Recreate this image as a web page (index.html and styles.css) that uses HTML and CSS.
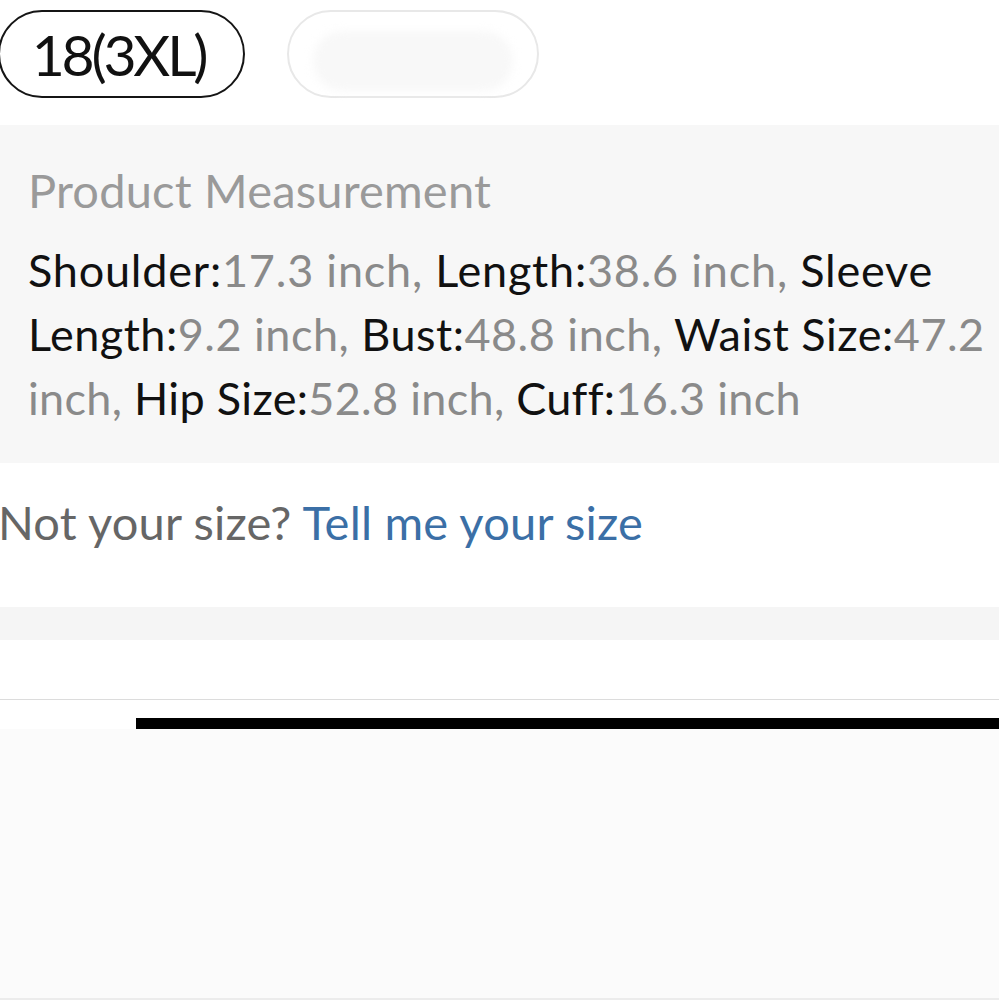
FILE: index.html
```html
<!DOCTYPE html>
<html lang="en">
<head>
<meta charset="utf-8">
<link rel="stylesheet" href="styles.css">
</head>
<body>
<div class="sizes">
  <div class="pill pill-active">18(3XL)</div>
  <div class="pill pill-blur"><span class="smudge"></span></div>
</div>
<section class="measure">
  <div class="measure-title">Product Measurement</div>
  <p class="measure-text"><span class="ln ln1"><b>Shoulder:</b>17.3 inch, <b>Length:</b>38.6 inch, <b>Sleeve</b></span><br><span class="ln ln2"><b>Length:</b>9.2 inch, <b>Bust:</b>48.8 inch, <b>Waist Size:</b>47.2</span><br><span class="ln ln3">inch, <b>Hip Size:</b>52.8 inch, <b>Cuff:</b>16.3 inch</span></p>
</section>
<p class="notsize">Not your size? <a class="tell" href="#">Tell me your size</a></p>
<div class="band"></div>
<div class="tabs"></div>
<div class="bar-row"><div class="bar"></div></div>
<div class="rest"></div>
</body>
</html>
```
FILE: styles.css
```css
html, body {
  margin: 0;
  padding: 0;
  background: #ffffff;
  font-family: Lato, "Noto Sans", sans-serif;
}
body {
  width: 999px;
  height: 1000px;
  overflow: hidden;
}
.sizes {
  display: flex;
  gap: 42px;
  padding-top: 10px;
  height: 88px;
  margin-left: -2px;
}
.pill {
  box-sizing: border-box;
  height: 88px;
  border-radius: 44px;
  display: flex;
  align-items: center;
  justify-content: center;
  font-size: 57px;
  color: #111;
}
.pill-active {
  width: 247px;
  border: 2px solid #151515;
  letter-spacing: -3.2px;
  padding-right: 6px;
}
.pill-blur {
  width: 252px;
  border: 2px solid #e8e8e8;
}
.smudge {
  width: 200px;
  height: 60px;
  border-radius: 30px;
  background: #f8f8f8;
  filter: blur(4px);
  margin-top: 14px;
}
.measure {
  margin-top: 27px;
  background: #f7f7f7;
  padding: 40px 0 0 28px;
  height: 338px;
  box-sizing: border-box;
}
.measure-title {
  font-size: 47px;
  line-height: 50px;
  color: #9a9a9a;
  letter-spacing: 0.2px;
}
.measure-text {
  margin: 23px 0 0 0;
  font-size: 45px;
  line-height: 64px;
  color: #8a8a8a;
  white-space: nowrap;
}
.measure-text b {
  font-weight: normal;
  color: #111;
}
.ln1 { letter-spacing: 0.78px; }
.ln2 { letter-spacing: 0.5px; }
.ln3 { letter-spacing: 0.3px; }
.notsize {
  margin: 27px 0 0 -2px;
  font-size: 47px;
  line-height: 64px;
  color: #666;
  letter-spacing: 0.2px;
}
.tell {
  color: #3b6fa6;
  text-decoration: none;
}
.band {
  margin-top: 53px;
  height: 33px;
  background: #f5f5f5;
}
.tabs {
  height: 59px;
  background: #fff;
  border-bottom: 1px solid #dcdcdc;
}
.bar-row {
  padding-top: 18px;
  background: #fff;
}
.bar {
  margin-left: 136px;
  height: 11px;
  background: #000;
}
.rest {
  height: 269px;
  background: #fbfbfb;
  border-bottom: 2px solid #ececec;
}
```
